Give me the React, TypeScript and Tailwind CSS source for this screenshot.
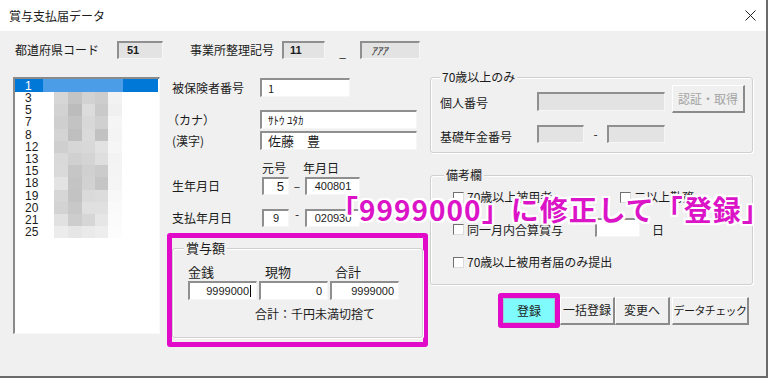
import React from 'react'

const listNumbers = ['3', '5', '7', '8', '12', '13', '15', '18', '19', '20', '21', '25']

const mosaic = [
  ['#d6d6d6', '#c4c4c4', '#d2d2d2', '#cdcdcd', '#f2f2f2'],
  ['#d2d2d2', '#bcbcbc', '#dcdcdc', '#c9c9c9', '#f0f0f0'],
  ['#cfcfcf', '#c3c3c3', '#d8d8d8', '#d0d0d0', '#f5f5f5'],
  ['#d4d4d4', '#bfbfbf', '#dadada', '#c2c2c2', '#f4f4f4'],
  ['#cfcfcf', '#d6d6d6', '#d8d8d8', '#e2e2e2', '#f6f6f6'],
  ['#d9d9d9', '#d0d0d0', '#d4d4d4', '#dedede', '#f3f3f3'],
  ['#dadada', '#c6c6c6', '#d0d0d0', '#cbcbcb', '#f4f4f4'],
  ['#e3e3e3', '#c4c4c4', '#d2d2d2', '#c5c5c5', '#f5f5f5'],
  ['#d6d6d6', '#c3c3c3', '#dadada', '#dcdcdc', '#f8f8f8'],
  ['#d3d3d3', '#c8c8c8', '#e0e0e0', '#e0e0e0', '#fafafa'],
  ['#e1e1e1', '#cdcdcd', '#d6d6d6', '#e6e6e6', '#fbfbfb'],
  ['#ececec', '#e6e6e6', '#eaeaea', '#ededed', '#fcfcfc'],
]
const cellW = [14, 14, 13, 13, 14]

// sunken text box, white or greyed
function Box({ className = '', gray = false, children }: { className?: string; gray?: boolean; children?: React.ReactNode }) {
  return (
    <div className={`flex items-center shrink-0 border-t-2 border-l-2 border-t-[#8f8f8f] border-l-[#8f8f8f] border-b border-r border-b-[#f6f6f6] border-r-[#f6f6f6] ${gray ? 'bg-[#e3e3e3]' : 'bg-white'} ${className}`}>
      {children}
    </div>
  )
}

function Group({ label, legendClass = '', className = '', children }: { label: string; legendClass?: string; className?: string; children?: React.ReactNode }) {
  return (
    <div className={`relative border border-[#cfcfcf] rounded-[3px] shadow-[inset_1px_1px_0_#ffffff,1px_1px_0_#ffffff] ${className}`}>
      <span className={`absolute -top-[9px] bg-[#f0f0f0] px-[2px] text-[12px] leading-[16px] ${legendClass}`}>{label}</span>
      {children}
    </div>
  )
}

function Check({ label }: { label: string }) {
  return (
    <div className="flex items-center">
      <span className="w-[11px] h-[11px] shrink-0 bg-white border-t border-l border-[#6f6f6f] border-b border-r border-b-[#dcdcdc] border-r-[#dcdcdc]" />
      <span className="ml-[3px] text-[12px] leading-[16px]">{label}</span>
    </div>
  )
}

function Btn({ className = '', children }: { className?: string; children?: React.ReactNode }) {
  return (
    <div className={`flex items-center justify-center shrink-0 h-[28px] whitespace-nowrap bg-[#f0f0f0] border-t border-l border-t-white border-l-white border-r-2 border-b-2 border-r-[#8a8a8a] border-b-[#8a8a8a] ${className}`}>
      {children}
    </div>
  )
}

export default function App() {
  return (
    <div className="relative w-[768px] h-[378px] overflow-hidden bg-[#f0f0f0] border-r-2 border-b-2 border-[#6b6b6b] flex flex-col font-['Noto_Sans_CJK_JP',sans-serif] text-[#1c1c1c]">
      {/* title bar */}
      <div className="h-[31px] shrink-0 bg-white flex items-center justify-between pl-[9px] pr-[10px]">
        <span className="text-[12px]">賞与支払届データ</span>
        <svg width="11" height="11" viewBox="0 0 11 11">
          <path d="M0.5 0.5L10.5 10.5M10.5 0.5L0.5 10.5" stroke="#222" strokeWidth="1" fill="none" />
        </svg>
      </div>

      {/* codes row */}
      <div className="flex items-center h-[18px] mt-[10px] pl-[15px] text-[12px]">
        <span className="w-[102px]">都道府県コード</span>
        <Box gray className="w-[46px] h-[18px] pl-[8px] text-[11px] font-bold font-['Liberation_Sans',sans-serif]">51</Box>
        <span className="ml-[27px] w-[92px]">事業所整理記号</span>
        <Box gray className="w-[43px] h-[18px] pl-[6px] text-[11px] font-bold font-['Liberation_Sans',sans-serif]">11</Box>
        <span className="w-[35px] text-center self-end leading-[14px]">_</span>
        <Box gray className="w-[60px] h-[18px] pl-[9px] text-[11px] italic">ｱｱｱ</Box>
      </div>

      {/* main */}
      <div className="flex items-start mt-[18px]">
        {/* list */}
        <div className="ml-[13px] w-[147px] h-[257px] shrink-0 bg-white border-t-2 border-l-2 border-t-[#8a8a8a] border-l-[#8a8a8a] border-b border-r border-b-[#fafafa] border-r-[#fafafa] font-['Liberation_Sans',sans-serif] text-[12px]">
          <div className="flex h-[13px] bg-[#0078d7] text-white items-center mr-[1px]">
            <span className="w-[28px] pl-[10px] leading-[12px]">1</span>
            <div className="w-[80px] h-full bg-[#4a9de6]" />
          </div>
          {listNumbers.map((n, i) => (
            <div key={n} className="flex h-[12.2px] items-center">
              <span className="w-[39px] pl-[10px] leading-[12px]">{n}</span>
              {mosaic[i].map((c, j) => (
                <div key={j} className="h-full" style={{ width: cellW[j], background: c }} />
              ))}
            </div>
          ))}
        </div>

        {/* middle column */}
        <div className="ml-[7px] w-[261px] shrink-0 flex flex-col text-[12px]">
          <div className="flex items-center h-[19px] mt-[1px]">
            <span className="w-[93px] pl-[5px]">被保険者番号</span>
            <Box className="w-[90px] h-[19px] pl-[6px] text-[11px]">1</Box>
          </div>
          <div className="flex items-center h-[19px] mt-[13px]">
            <span className="w-[93px]">（カナ）</span>
            <Box className="w-[157px] h-[19px] pl-[6px] text-[11px]">ｻﾄｳ ﾕﾀｶ</Box>
          </div>
          <div className="flex items-center h-[19px] mt-[2px]">
            <span className="w-[93px] pl-[5px]">(漢字)</span>
            <Box className="w-[157px] h-[19px] pl-[6px] text-[13px]">佐藤　豊</Box>
          </div>
          <div className="flex items-center h-[16px] mt-[10px]">
            <span className="ml-[95px] w-[41px]">元号</span>
            <span>年月日</span>
          </div>
          <div className="flex items-center h-[18px] mt-[1px]">
            <span className="w-[95px] pl-[5px]">生年月日</span>
            <Box className="w-[27px] h-[18px] justify-end pr-[4px] text-[13px] font-['Liberation_Sans',sans-serif]">5</Box>
            <span className="w-[16px] text-center">–</span>
            <Box className="w-[55px] h-[18px] justify-center text-[11px] font-['Liberation_Sans',sans-serif]">400801</Box>
          </div>
          <div className="flex items-center h-[18px] mt-[14px]">
            <span className="w-[95px] pl-[5px]">支払年月日</span>
            <Box className="w-[27px] h-[18px] justify-center text-[11px] font-['Liberation_Sans',sans-serif]">9</Box>
            <span className="w-[16px] text-center -mt-[8px]">-</span>
            <Box className="w-[55px] h-[18px] justify-center text-[11px] font-['Liberation_Sans',sans-serif]">020930</Box>
          </div>

          {/* bonus amount */}
          <div className="mt-[6px] h-[114px] border-[5px] border-[#e10ac8] rounded-[3px]">
            <Group label="賞与額" legendClass="left-[11px] text-[13px]" className="mt-[10px] h-[90px]">
              <div className="flex items-center h-[14px] mt-[16px] pl-[15px] text-[13px]">
                <span className="w-[77px]">金銭</span>
                <span className="w-[70px]">現物</span>
                <span>合計</span>
              </div>
              <div className="flex items-center mt-[2px] pl-[15px] gap-[2px] text-[11px] font-['Liberation_Sans',sans-serif]">
                <Box className="w-[69px] h-[19px] justify-end pr-[5px]">9999000<span className="w-px h-[12px] bg-black ml-px" /></Box>
                <Box className="w-[69px] h-[19px] justify-end pr-[5px]">0</Box>
                <Box className="w-[69px] h-[19px] justify-end pr-[4px]">9999000</Box>
              </div>
              <div className="mt-[6px] pl-[82px] text-[12px] leading-[16px]">合計：千円未満切捨て</div>
            </Group>
          </div>
        </div>

        {/* right column */}
        <div className="ml-[2px] w-[323px] shrink-0 flex flex-col text-[12px]">
          <Group label="70歳以上のみ" legendClass="left-[9px]" className="h-[76px]">
            <div className="flex items-start h-[26px] mt-[7px] pl-[9px]">
              <span className="w-[97px] mt-[10px] leading-[16px]">個人番号</span>
              <Box gray className="w-[128px] h-[19px] mt-[7px]" />
              <Btn className="ml-[7px] w-[73px] h-[26px] text-[12px] text-[#a3a3a3]">認証・取得</Btn>
            </div>
            <div className="flex items-center h-[18px] mt-[14px] pl-[9px]">
              <span className="w-[97px] mt-[6px]">基礎年金番号</span>
              <Box gray className="w-[47px] h-[18px]" />
              <span className="w-[23px] text-center">-</span>
              <Box gray className="w-[58px] h-[18px]" />
            </div>
          </Group>

          <Group label="備考欄" legendClass="left-[13px]" className="mt-[22px] h-[110px]">
            <div className="flex items-center h-[16px] mt-[13px] pl-[22px]">
              <div className="w-[167px]"><Check label="70歳以上被用者" /></div>
              <Check label="二以上勤務" />
            </div>
            <div className="flex items-center h-[19px] mt-[13px] pl-[22px]">
              <div className="w-[142px] mt-[4px]"><Check label="同一月内合算賞与" /></div>
              <Box className="w-[45px] h-[19px]" />
              <span className="ml-[12px] mt-[4px]">日</span>
            </div>
            <div className="flex items-center h-[16px] mt-[17px] pl-[22px]">
              <Check label="70歳以上被用者届のみ提出" />
            </div>
          </Group>

          <div className="flex items-center h-[35px] mt-[8px] ml-[68px]">
            <div className="w-[62px] h-[35px] shrink-0 border-[5px] border-[#e10ac8] rounded-[3px]">
              <div className="w-full h-full flex items-center justify-center bg-[#80fbfd] border border-[#9ad0d2] text-[12px]">登録</div>
            </div>
            <Btn className="w-[55px] text-[12px]">一括登録</Btn>
            <Btn className="w-[55px] text-[12px]">変更へ</Btn>
            <Btn className="ml-[2px] w-[77px] text-[11px] tracking-[-0.6px]">データチェック</Btn>
          </div>
        </div>
      </div>

      {/* annotation */}
      <div className="absolute left-[330px] top-[195px] text-[28px] leading-[28px] font-bold tracking-[1px] whitespace-nowrap text-[#dc14c8] [text-shadow:2px_0_0_#fff,-2px_0_0_#fff,0_2px_0_#fff,0_-2px_0_#fff,2px_2px_0_#fff,-2px_-2px_0_#fff,2px_-2px_0_#fff,-2px_2px_0_#fff,0_0_3px_#fff]">
        「9999000」に修正して「登録」
      </div>
    </div>
  )
}
